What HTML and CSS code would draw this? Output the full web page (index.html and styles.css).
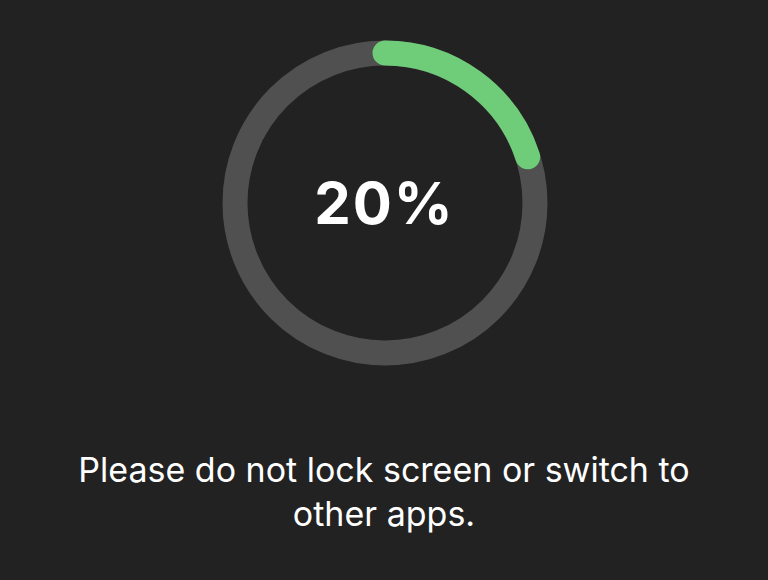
FILE: index.html
```html
<!DOCTYPE html>
<html>
<head>
<meta charset="utf-8">
<link rel="stylesheet" href="styles.css">
</head>
<body>
<main class="screen">
  <div class="ring">
    <svg class="ring-svg" width="326" height="326" viewBox="0 0 326 326">
      <circle class="track" cx="163" cy="163" r="150"></circle>
      <circle class="progress" cx="163" cy="163" r="150" transform="rotate(-90 163 163)"></circle>
    </svg>
    <div class="percent">20%</div>
  </div>
  <p class="message">Please do not lock screen or switch to other apps.</p>
</main>
</body>
</html>
```
FILE: styles.css
```css
html, body {
  margin: 0;
  padding: 0;
  background: #222222;
}
.screen {
  width: 768px;
  height: 580px;
  display: flex;
  flex-direction: column;
  align-items: center;
  padding-top: 40px;
  box-sizing: border-box;
  font-family: Inter, "Liberation Sans", sans-serif;
  color: #ffffff;
}
.ring {
  display: grid;
  width: 326px;
  height: 326px;
  margin-left: 1px;
}
.ring-svg, .percent {
  grid-area: 1 / 1;
}
.ring-svg {
  display: block;
}
.track {
  fill: none;
  stroke: #505050;
  stroke-width: 25;
}
.progress {
  fill: none;
  stroke: #6fcc78;
  stroke-width: 25;
  stroke-linecap: round;
  stroke-dasharray: 188.5 1000;
}
.percent {
  align-self: center;
  justify-self: center;
  font-size: 58px;
  font-weight: 700;
  letter-spacing: 2px;
  line-height: 1;
}
.message {
  margin: 82px 0 0;
  max-width: 660px;
  text-align: center;
  font-size: 34px;
  line-height: 44px;
  font-weight: 400;
}
```
